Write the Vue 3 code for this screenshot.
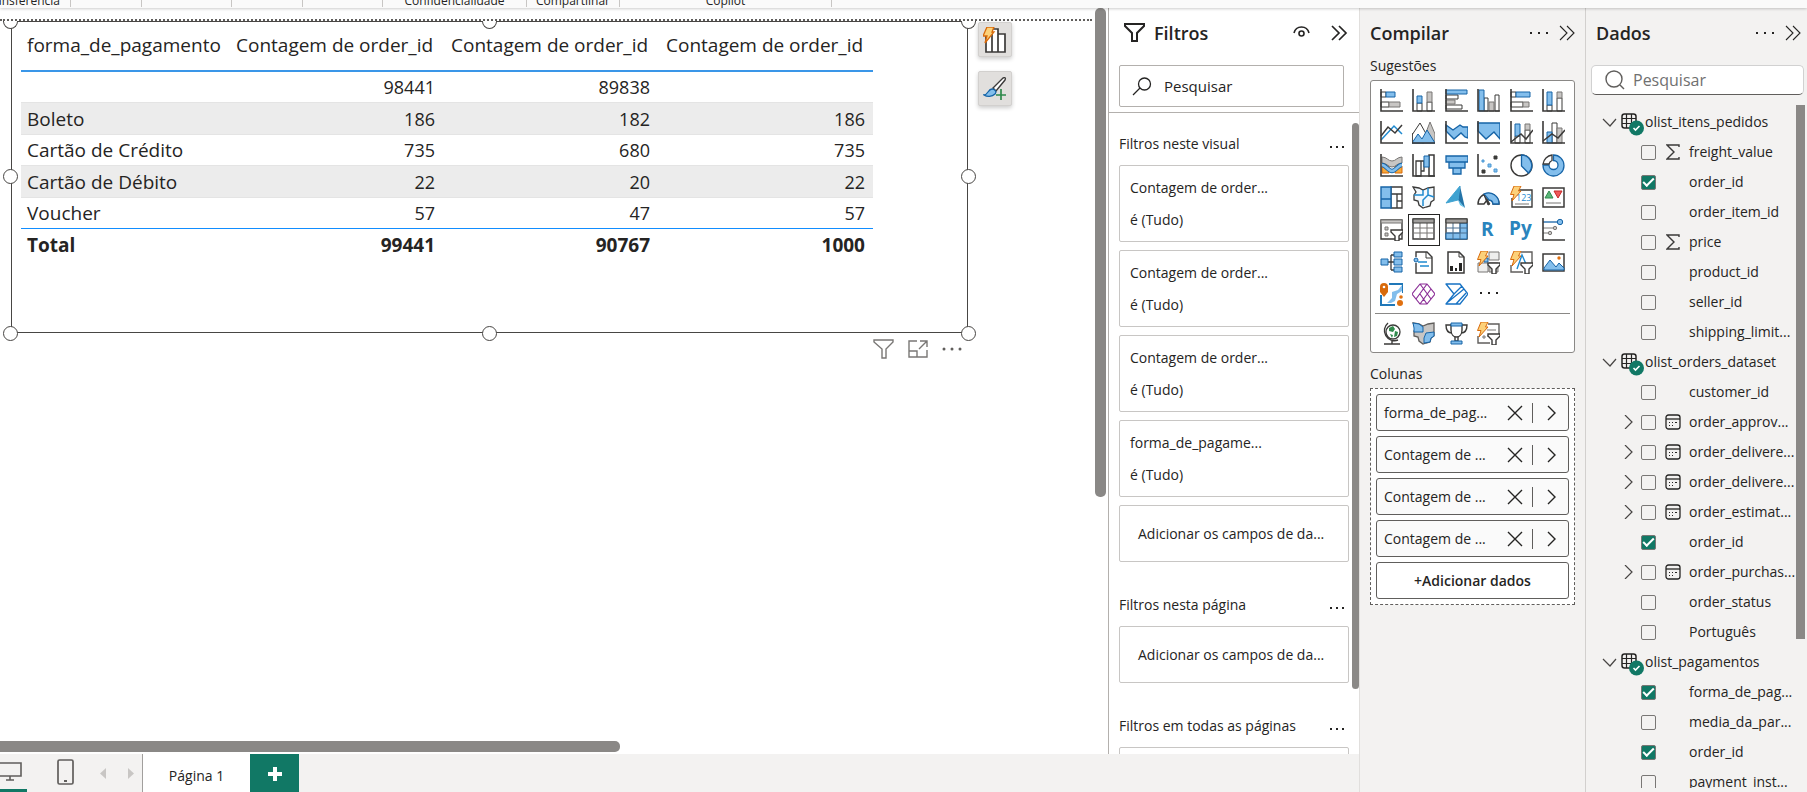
<script setup>
import { ref } from 'vue'

const ribbonGroups = [
  { label: 'Transferência', width: 71, end: true },
  { label: '', width: 71 },
  { label: '', width: 90 },
  { label: '', width: 71 },
  { label: '', width: 80 },
  { label: 'Confidencialidade', width: 144 },
  { label: 'Compartilhar', width: 93 },
  { label: 'Copilot', width: 212 }
]

const rows = [
  ['', '98441', '89838', ''],
  ['Boleto', '186', '182', '186'],
  ['Cartão de Crédito', '735', '680', '735'],
  ['Cartão de Débito', '22', '20', '22'],
  ['Voucher', '57', '47', '57']
]

const handles = ['nw', 'n', 'ne', 'w', 'e', 'sw', 's', 'se']

const filterGroups = [
  {
    title: 'Filtros neste visual',
    cards: ['Contagem de order...', 'Contagem de order...', 'Contagem de order...', 'forma_de_pagame...']
  },
  { title: 'Filtros nesta página', cards: [] },
  { title: 'Filtros em todas as páginas', cards: [] }
]

const columns = ['forma_de_pag...', 'Contagem de ...', 'Contagem de ...', 'Contagem de ...']

const tables = ref([
  {
    name: 'olist_itens_pedidos',
    fields: [
      { name: 'freight_value', icon: 'sum' },
      { name: 'order_id', checked: true },
      { name: 'order_item_id' },
      { name: 'price', icon: 'sum' },
      { name: 'product_id' },
      { name: 'seller_id' },
      { name: 'shipping_limit...' }
    ]
  },
  {
    name: 'olist_orders_dataset',
    fields: [
      { name: 'customer_id' },
      { name: 'order_approv...', icon: 'date' },
      { name: 'order_delivere...', icon: 'date' },
      { name: 'order_delivere...', icon: 'date' },
      { name: 'order_estimat...', icon: 'date' },
      { name: 'order_id', checked: true },
      { name: 'order_purchas...', icon: 'date' },
      { name: 'order_status' },
      { name: 'Português' }
    ]
  },
  {
    name: 'olist_pagamentos',
    fields: [
      { name: 'forma_de_pag...', checked: true },
      { name: 'media_da_par...' },
      { name: 'order_id', checked: true },
      { name: 'payment_inst...' }
    ]
  }
])

// colour shorthands for the visual gallery
const D = 'stroke="#3b3a39"'
const W = 'fill="#fff" stroke="#3b3a39"'
const B = 'fill="#83beec" stroke="#1664a7"'
const G = 'fill="#c8c6c4" stroke="#797775"'
const axis = `<path d="M1 0V22H23" ${D} stroke-width="1.6"/>`
const bolt = '<path d="M4 0h7L8.500 5H11L2 15l2-6.500H.5z" fill="#fcd17a" stroke="#d86a0b"/>'
const funnel = `<path d="M11 12h12v2l-4 4v5h-4v-5l-4-4z" ${W} stroke-width="1.4"/>`
const mapShape = 'M1 1l6 1 4 2 5-2 6-1v13l-3 2-1 4-4 1-3 1-4-3-1-4-4-1V9l2-3z'

const visuals = [
  { name: 'Barras empilhadas', svg: `<path d="M1 3h5v5H1zM1 13h8v5H1z" ${W}/><path d="M6 3h9v5H6z" ${B}/><path d="M9 13h11v5H9z" ${G}/>${axis}` },
  { name: 'Colunas empilhadas', svg: `<path d="M5 14h5v8H5zM15 13h5v9h-5z" ${W}/><path d="M5 7h5v7H5z" ${B}/><path d="M15 3h5v10h-5z" ${G}/>${axis}` },
  { name: 'Barras clusterizadas', svg: `<path d="M1 6h12v4H1zM1 16h16v4H1z" ${W}/><path d="M1 11h9v4H1z" ${G}/><path d="M1 1h21v4H1z" ${B}/>${axis}` },
  { name: 'Colunas clusterizadas', svg: `<path d="M7 9h4v13H7zM18 6h4v16h-4z" ${W}/><path d="M12 13h5v9h-5z" ${G}/><path d="M2 1h5v21H2z" ${B}/>${axis}` },
  { name: 'Barras 100%', svg: `<path d="M1 3h5v5H1zM1 13h12v5H1z" ${W}/><path d="M6 3h14v5H6z" ${B}/><path d="M13 13h6v5h-6z" ${G}/>${axis}` },
  { name: 'Colunas 100%', svg: `<path d="M5 16h5v6H5zM15 9h5v13h-5z" ${W}/><path d="M5 3h5v13H5z" ${B}/><path d="M15 3h5v6h-5z" ${G}/>${axis}` },
  { name: 'Linhas', svg: `<path d="M1 19L14 5l8 8" stroke="#1f8ad0" stroke-width="1.5"/><path d="M1 15l7-9 7 6 7-8" ${D} stroke-width="1.5"/>${axis}` },
  { name: 'Área', svg: `<path d="M10 22L18 1l5 12v9z" ${G}/><path d="M0 14L8 2l9 16-5 4H0z" ${W}/><path d="M0 22l6-9 4 5 5-9 8 13z" ${B}/><path d="M0 12v10h23" ${D} stroke-width="1.6"/>` },
  { name: 'Área empilhada', svg: `<path d="M1 4l7 5 7-5 3 2h5v11l-3-1-4-4-7 6-8-8z" ${B} stroke-width="1.4"/>${axis}` },
  { name: 'Área 100%', svg: `<path d="M1 2h22v16l-6-7-8 7-8-8z" ${B} stroke-width="1.4"/>${axis}` },
  { name: 'Linhas e colunas empilhadas', svg: `<path d="M5 15h5v7H5zM15 9h5v13h-5z" ${W}/><path d="M5 3h5v12H5z" ${B}/><path d="M15 3h5v6h-5z" ${G}/><path d="M1 21l10-8 5 5 7-9" ${D} stroke-width="1.5"/>${axis}` },
  { name: 'Linhas e colunas clusterizadas', svg: `<path d="M10 2h5v20h-5z" ${W}/><path d="M15 7h5v15h-5z" ${G}/><path d="M5 11h5v11H5z" ${B}/><path d="M1 20l9-7 6 4 7-8" ${D} stroke-width="1.5"/>${axis}` },
  { name: 'Faixas', svg: `<path d="M2 12h7v7H2zM15 12h7v7h-7z" fill="#f7a93b" stroke="#d86a0b"/><path d="M2 3c5 0 6 4 10 4s5-4 10-4v6c-5 0-6 4-10 4S7 9 2 9z" ${G}/><path d="M2 11c4 0 6 6 10 6s6-6 10-6" stroke="#1664a7" stroke-width="4.500"/><path d="M2 11c4 0 6 6 10 6s6-6 10-6" stroke="#83beec" stroke-width="2.500"/>${axis}` },
  { name: 'Cascata', svg: `<path d="M4 7h5v15H4zM9 7h3v10H9z" ${W} stroke-width="1.3"/><path d="M17 1h5v21h-5z" ${W} stroke-width="1.5"/><path d="M12 2h5v11h-5z" ${B}/>${axis}` },
  { name: 'Funil', svg: `<path d="M1 2h22v6H1zM4 8h16v6H4zM8 14h8v6H8z" ${B} stroke-width="1.3"/>` },
  { name: 'Dispersão', svg: `<path d="M17 2h3v3h-3zM5 16h3v3H5z" fill="#3b3a39" ${D}/><path d="M5 6h2v2H5zM11 10h3v3h-3zM17 15h3v3h-3z" fill="#83beec" stroke="#4a98d4"/>${axis}` },
  { name: 'Pizza', svg: `<circle cx="11.500" cy="11.500" r="10.500" ${W} stroke-width="1.4"/><path d="M11.500 1a10.500 10.500 0 0 1 7 18l-7-7z" ${B} stroke-width="1.3"/>` },
  { name: 'Rosca', svg: `<path d="M11.500 1a10.500 10.500 0 1 1-10.500 10h6a4.500 4.500 0 1 0 4.500-4.500z" ${B} stroke-width="1.3"/><path d="M1 10a10.500 10.500 0 0 1 9-9v5.500A5 5 0 0 0 7 10z" ${W} stroke-width="1.3"/>` },
  { name: 'Treemap', svg: `<path d="M11 1h11v7H11zM11 8h6v14h-6zM17 8h5v7h-5zM17 15h5v7h-5z" ${W} stroke-width="1.3"/><path d="M1 1h10v12H1zM1 13h10v9H1z" ${B} stroke-width="1.4"/>` },
  { name: 'Mapa', svg: `<path d="${mapShape}" fill="#f3f9fd" ${D} stroke-width="1.3"/><path d="M2 9h9V4M16 2v7l6 2M11 20v-6l5-5" stroke="#1f8ad0" stroke-width="1.5"/>` },
  { name: 'Azure Maps', svg: '<path d="M15 0L1 17l12-3z" fill="#3fa2d1"/><path d="M15 0l5 22-7-8z" fill="#2474a8"/><path d="M13 14l7 8-5-3z" fill="#58bde6"/><path d="M15 0L1 17l12-3z" stroke="#3fa2d1"/>' },
  { name: 'Medidor', svg: `<path d="M1 18a10.500 10.500 0 0 1 21 0h-6a4.500 4.500 0 0 0-6-4l-3 4z" ${W} stroke-width="1.4"/><path d="M7 8a10.500 10.500 0 0 1 15 10h-6a4.500 4.500 0 0 0-4-4z" ${B} stroke-width="1.3"/><path d="M7 9l6 9-2 1z" fill="#3b3a39" ${D}/>` },
  { name: 'Cartão', svg: `<path d="M4 4h18v17H2V12" ${W} stroke-width="1.4"/><text x="6" y="15" font-size="9" fill="#1f8ad0" font-family="Open Sans, sans-serif">123</text><path d="M5 18h14" stroke="#797775"/>${bolt}` },
  { name: 'KPI', svg: `<path d="M1 2h21v19H1z" ${W} stroke-width="1.5"/><path d="M3 12l4-7 4 7z" fill="#5cb77a" stroke="#2f8a4c"/><path d="M12 5h8l-4 7z" fill="#ef5a5a" stroke="#c62828"/><path d="M4 17h15" stroke="#797775"/>` },
  { name: 'Segmentação', svg: `<path d="M1 2h21v19H1z" ${W} stroke-width="1.4"/><path d="M1 2h21v3H1z" ${G}/><path d="M5 9h3v3H5zM5 15h3v3H5z" ${G}/>${funnel}` },
  { name: 'Tabela', active: true, svg: `<path d="M1 1h21v20H1z" ${W} stroke-width="1.4"/><path d="M8 5v16M15 5v16M1 10h21M1 15h21" stroke="#797775"/><path d="M1 1h21v4H1z" fill="#a19f9d" ${D}/>` },
  { name: 'Matriz', svg: `<path d="M1 1h21v20H1z" ${W} stroke-width="1.4"/><path d="M15 5h7v16H1v-6h14z" ${B}/><path d="M8 5v16M15 5v16M1 10h21M1 15h21" stroke="#4a6f8f"/><path d="M1 1h21v4H1z" fill="#a19f9d" ${D}/>` },
  { name: 'R', svg: '<text x="4" y="18" font-size="19" font-weight="700" fill="#2a84bd" font-family="Open Sans, sans-serif">R</text>' },
  { name: 'Python', svg: '<text x="-1" y="17" font-size="19" font-weight="700" fill="#2a84bd" font-family="Open Sans, sans-serif">Py</text>' },
  { name: 'Influenciadores', svg: `<path d="M1 4h15" stroke="#1664a7" stroke-width="1.3"/><circle cx="18" cy="4" r="2.700" ${B}/><path d="M1 10h11M1 15h6" stroke="#797775"/><circle cx="13" cy="10" r="1.700" ${G}/><circle cx="8" cy="15" r="1.700" ${G}/>${axis}` },
  { name: 'Árvore', svg: `<path d="M8 11h7M11 4v15M11 4h4M11 19h4" ${D} stroke-width="1.3"/><path d="M1 8h7v6H1zM14 1h8v5h-8zM14 8h8v6h-8zM14 16h8v5h-8z" ${B}/>` },
  { name: 'Narrativa', svg: `<path d="M4 12v10h16V6l-5-5H4v5" ${W} stroke-width="1.4"/><path d="M14 1v6h6" ${D}/><circle cx="4" cy="9" r="2" ${B}/><path d="M6 11h9M8 15h9" stroke="#1f8ad0" stroke-width="1.3"/>` },
  { name: 'Relatório paginado', svg: `<path d="M3 1h11l5 5v16H3z" ${W} stroke-width="1.5"/><path d="M14 1v5h5" ${D}/><path d="M5 15h3v5H5zM10 17h2v3h-2zM14 12h3v8h-3z" fill="#252423"/>` },
  { name: 'Segmentação de botões', svg: `<path d="M12 1h10v8H12zM1 12h10v9H1z" ${G} fill-opacity=".3"/><path d="M7 7h4v4H7z" ${B}/><path d="M12 12h9v9h-9z" ${G}/>${bolt}${funnel}` },
  { name: 'Segmentação de texto', svg: `<path d="M11 1h11v11M1 14v7h12" stroke="#605e5c" stroke-width="1.4"/><path d="M7 18l5-14 4 9" stroke="#1f8ad0" stroke-width="1.4"/>${bolt}${funnel}` },
  { name: 'Imagem', svg: `<path d="M1 3h21v17H1z" ${W} stroke-width="1.5"/><path d="M2 17l6-8 6 7 3-4 5 5v2H2z" ${B}/><circle cx="17" cy="7" r="1.700" fill="#e07010"/>` },
  { name: 'ArcGIS', svg: '<path d="M9 1h14v9M1 12v10h14" stroke="#1f77b8" stroke-width="2"/><path d="M22 2v6l-5 3-2 7-4 2H7l5-5v-6l6-2z" fill="#83beec"/><path d="M4 0a4 4 0 0 1 4 4v5l-4 5-4-5V4a4 4 0 0 1 4-4z" fill="#d86a0b"/><circle cx="4" cy="4" r="1.300" fill="#fff"/><circle cx="20" cy="20" r="3" fill="#e07010"/><circle cx="21" cy="14" r="1.800" fill="#e07010"/>' },
  { name: 'Power Apps', svg: '<path d="M8 1h7l8 10-8 10H8L0 11zM8 1l11 15M15 1L4 16M8 21L19 6M15 21l-7-10" stroke="#8b2f97" stroke-width="1.2" stroke-linejoin="round"/>' },
  { name: 'Power Automate', svg: '<path d="M1 1h14l8 10-8 10H1l8-10zM9 11l8-8M3 19L19 6M11 21l10-11" stroke="#1672c4" stroke-width="1.3" stroke-linejoin="round"/>' },
  { name: 'Mais visuais', svg: '<path d="M3 9h2v2H3zM11 9h2v2h-2zM19 9h2v2h-2z" fill="#252423"/>' }
]

const extraVisuals = [
  { name: 'Globo', svg: '<circle cx="13" cy="10" r="7" fill="#fff" stroke="#3b3a39" stroke-width="1.300"/><path d="M9 6l4-2 2 3-2 3-4-1zM15 9l3 1-1 4-3 1zM10 12l3 1-1 3z" fill="#2f8a4c"/><path d="M8 1a10 10 0 0 0 10 17M12 19v3M4 22h16" stroke="#3b3a39" stroke-width="1.400"/>' },
  { name: 'Mapa de formas', svg: `<path d="${mapShape}" fill="#c8c6c4" stroke="#605e5c" stroke-width="1.3"/><path d="M1 1l6 1 4 3v5H2V6zM14 11l8-1v4l-3 2-1 4-6 1v-5z" ${B}/>` },
  { name: 'Troféu', svg: `<path d="M6 3H1c0 6 2 8 6 8M17 3h5c0 6-2 8-6 8M10 14v5h3v-5" ${D} stroke-width="1.4"/><path d="M6 3h11v5c0 5-3 7-5.500 7S6 13 6 8z" ${W} stroke-width="1.4"/><path d="M6 1h11v3H6zM6 19h11v3H6z" ${B}/>` },
  { name: 'Segmentação de lista', svg: `<path d="M11 2h11v10M1 14v7h12" stroke="#605e5c" stroke-width="1.4"/><path d="M10 8h9M10 14h5M6 14h2v2H6z" stroke="#797775"/>${bolt}${funnel}` }
]
</script>

<template>
  <div class="app">
    <header class="ribbon">
      <div
        v-for="(group, i) in ribbonGroups"
        :key="i"
        class="ribbon-group"
        :class="{ end: group.end }"
        :style="{ width: group.width + 'px' }"
      >
        <span>{{ group.label }}</span>
      </div>
    </header>

    <div class="workspace">
      <div class="report">
        <div class="report-body">
          <main class="canvas">
            <div class="page-edge"></div>
            <section class="visual">
              <i v-for="h in handles" :key="h" class="handle" :class="h"></i>
              <table>
                <thead>
                  <tr>
                    <th class="first">forma_de_pagamento</th>
                    <th v-for="n in 3" :key="n">Contagem de order_id</th>
                  </tr>
                </thead>
                <tbody>
                  <tr v-for="row in rows" :key="row[0]">
                    <td v-for="(cell, i) in row" :key="i">{{ cell }}</td>
                  </tr>
                </tbody>
                <tfoot>
                  <tr>
                    <td>Total</td>
                    <td>99441</td>
                    <td>90767</td>
                    <td>1000</td>
                  </tr>
                </tfoot>
              </table>

              <div class="side-tools">
                <button aria-label="Sugerir visual">
                  <svg width="24" height="26" viewBox="0 0 24 26" fill="none">
                    <path d="M3 7h6v18H3zM9 2h6v23H9zM15 7h7v18h-7z" fill="#fff" stroke="#3b3a39" stroke-width="1.7" />
                    <path d="M4 0h7L9 5h2L2 16l2-7H0z" fill="#fcd17a" stroke="#d86a0b" stroke-width="1.3" />
                  </svg>
                </button>
                <button aria-label="Formatar visual">
                  <svg width="24" height="24" viewBox="0 0 24 24" fill="none">
                    <path d="M10 11L20 1c2-1 3 0 2 2l-9 11z" fill="#fff" stroke="#3b3a39" stroke-width="1.4" />
                    <path d="M1 18c4 0 4-6 8-6 3 0 5 3 3 5-3 3-8 3-11 1z" fill="#83beec" stroke="#1664a7" stroke-width="1.3" />
                    <path d="M18 13v10M13 18h10" stroke="#e1dfdd" stroke-width="4" />
                    <path d="M18 12v11M13 18h10" stroke="#2f8a4c" stroke-width="1.7" />
                  </svg>
                </button>
              </div>

              <div class="visual-tools">
                <button aria-label="Filtros do visual">
                  <svg width="21" height="20" viewBox="0 0 21 20" fill="none">
                    <path d="M1 1h19v2l-7 7v9H9v-9L1 3z" stroke="#797775" stroke-width="1.4" />
                  </svg>
                </button>
                <button aria-label="Modo de foco">
                  <svg width="20" height="18" viewBox="0 0 20 18" fill="none">
                    <path d="M9 1H1v16h18v-7M1 11h8v6M12 1h7v6M19 1l-8 8" stroke="#797775" stroke-width="1.4" />
                  </svg>
                </button>
                <button aria-label="Mais opções">
                  <svg width="20" height="4" viewBox="0 0 20 4" fill="#605e5c">
                    <circle cx="2" cy="2" r="1.5" /><circle cx="10" cy="2" r="1.5" /><circle cx="18" cy="2" r="1.5" />
                  </svg>
                </button>
              </div>
            </section>
            <div class="scroll-v"></div>
            <div class="scroll-h"></div>
          </main>

          <aside class="filters">
            <div class="pane-head">
              <svg width="22" height="20" viewBox="0 0 22 20" fill="none">
                <path d="M1 1h19v2l-7 7v8H8v-8L1 3z" stroke="#252423" stroke-width="2" />
              </svg>
              <h2>Filtros</h2>
              <button aria-label="Mostrar filtros">
                <svg width="17" height="15" viewBox="0 0 17 15" fill="none" stroke="#252423" stroke-width="1.6">
                  <path d="M1 7c2-8 13-8 15 0" /><circle cx="8.500" cy="7.500" r="2.500" />
                </svg>
              </button>
              <button aria-label="Recolher filtros">
                <svg width="17" height="16" viewBox="0 0 17 16" fill="none" stroke="#252423" stroke-width="1.7">
                  <path d="M1 1l7 7-7 7M8 1l7 7-7 7" />
                </svg>
              </button>
            </div>
            <label class="filter-search">
              <svg width="20" height="19" viewBox="0 0 20 19" fill="none" stroke="#252423" stroke-width="1.3">
                <circle cx="12.500" cy="7" r="6" /><path d="M8 11l-7 7" />
              </svg>
              <input type="text" placeholder="Pesquisar" aria-label="Pesquisar filtros" />
            </label>
            <div class="filter-list">
              <section v-for="group in filterGroups" :key="group.title" class="filter-group">
                <div class="group-head">
                  <h3>{{ group.title }}</h3>
                  <button aria-label="Mais opções">
                    <svg width="14" height="2" viewBox="0 0 14 2" fill="#252423">
                      <path d="M0 0h2v2H0zM6 0h2v2H6zM12 0h2v2h-2z" />
                    </svg>
                  </button>
                </div>
                <div v-for="(card, i) in group.cards" :key="i" class="filter-card">
                  <span>{{ card }}</span>
                  <span>é (Tudo)</span>
                </div>
                <div class="filter-card drop">Adicionar os campos de da...</div>
              </section>
              <div class="filter-scroll"></div>
            </div>
          </aside>
        </div>

        <footer class="pages">
          <button class="view active" aria-label="Layout da área de trabalho">
            <svg width="27" height="20" viewBox="0 0 27 20" fill="none" stroke="#605e5c" stroke-width="1.6">
              <path d="M0 1h21v13H0M10 14v4M6 18h8" />
            </svg>
          </button>
          <button class="view" aria-label="Layout móvel">
            <svg width="17" height="26" viewBox="0 0 17 26" fill="none">
              <rect x="1" y="1" width="15" height="24" rx="1.500" stroke="#605e5c" stroke-width="1.7" />
              <path d="M7 21h3v2H7z" fill="#605e5c" />
            </svg>
          </button>
          <button class="arrow" aria-label="Página anterior">
            <svg width="6" height="11" viewBox="0 0 6 11" fill="#c8c6c4"><path d="M6 0v11L0 5.500z" /></svg>
          </button>
          <button class="arrow" aria-label="Próxima página">
            <svg width="6" height="11" viewBox="0 0 6 11" fill="#c8c6c4"><path d="M0 0v11l6-5.500z" /></svg>
          </button>
          <button class="tab">Página 1</button>
          <button class="add-page" aria-label="Nova página">
            <svg width="14" height="14" viewBox="0 0 14 14" fill="#fff"><path d="M5 0h4v5h5v4H9v5H5V9H0V5h5z" /></svg>
          </button>
        </footer>
      </div>

      <aside class="build">
        <div class="pane-head">
          <h2>Compilar</h2>
          <button aria-label="Mais opções">
            <svg width="18" height="2" viewBox="0 0 18 2" fill="#252423">
              <path d="M0 0h2v2H0zM8 0h2v2H8zM16 0h2v2h-2z" />
            </svg>
          </button>
          <button aria-label="Recolher">
            <svg width="16" height="16" viewBox="0 0 16 16" fill="none" stroke="#252423" stroke-width="1.1">
              <path d="M1 1l7 7-7 7M8 1l7 7-7 7" />
            </svg>
          </button>
        </div>
        <h3>Sugestões</h3>
        <div class="gallery">
          <div class="icons">
            <button v-for="v in visuals" :key="v.name" :class="{ active: v.active }" :aria-label="v.name">
              <svg width="23" height="23" viewBox="0 0 23 23" fill="none" v-html="v.svg"></svg>
            </button>
          </div>
          <div class="icons extra">
            <button v-for="v in extraVisuals" :key="v.name" :aria-label="v.name">
              <svg width="23" height="23" viewBox="0 0 23 23" fill="none" v-html="v.svg"></svg>
            </button>
          </div>
        </div>
        <h3 class="wells-title">Colunas</h3>
        <div class="well">
          <div v-for="(col, i) in columns" :key="i" class="chip">
            <span>{{ col }}</span>
            <button class="remove" aria-label="Remover campo">
              <svg width="16" height="16" viewBox="0 0 16 16" fill="none" stroke="#252423" stroke-width="1.4">
                <path d="M1 1l14 14M15 1L1 15" />
              </svg>
            </button>
            <button class="open" aria-label="Opções do campo">
              <svg width="9" height="16" viewBox="0 0 9 16" fill="none" stroke="#252423" stroke-width="1.4">
                <path d="M1 1l7 7-7 7" />
              </svg>
            </button>
          </div>
          <button class="add-data">+Adicionar dados</button>
        </div>
      </aside>

      <aside class="data">
        <div class="pane-head">
          <h2>Dados</h2>
          <button aria-label="Mais opções">
            <svg width="18" height="2" viewBox="0 0 18 2" fill="#252423">
              <path d="M0 0h2v2H0zM8 0h2v2H8zM16 0h2v2h-2z" />
            </svg>
          </button>
          <button aria-label="Recolher">
            <svg width="16" height="16" viewBox="0 0 16 16" fill="none" stroke="#252423" stroke-width="1.1">
              <path d="M1 1l7 7-7 7M8 1l7 7-7 7" />
            </svg>
          </button>
        </div>
        <label class="data-search">
          <svg width="20" height="20" viewBox="0 0 20 20" fill="none" stroke="#605e5c" stroke-width="1.4">
            <circle cx="9" cy="9" r="8" /><path d="M15 15l4 4" />
          </svg>
          <input type="text" placeholder="Pesquisar" aria-label="Pesquisar dados" />
        </label>
        <div class="tree">
          <div v-for="table in tables" :key="table.name">
            <div class="table-row">
              <svg width="15" height="9" viewBox="0 0 15 9" fill="none" stroke="#484644" stroke-width="1.2">
                <path d="M1 1l7 7 6-7" />
              </svg>
              <svg width="24" height="24" viewBox="0 0 24 24" fill="none">
                <rect x="1" y="2" width="14" height="14" rx="2.500" stroke="#252423" stroke-width="1.5" />
                <path d="M5.500 2v14M10.500 2v14M1 6.500h14M1 11.500h14" stroke="#252423" stroke-width="1.2" />
                <circle cx="15.500" cy="16" r="7.500" fill="#117865" />
                <path d="M12.500 16l2 2 4-4" stroke="#fff" stroke-width="1.6" />
              </svg>
              <span>{{ table.name }}</span>
            </div>
            <label v-for="(field, i) in table.fields" :key="i" class="field-row">
              <span class="expand">
                <svg v-if="field.icon === 'date'" width="9" height="14" viewBox="0 0 9 14" fill="none" stroke="#484644" stroke-width="1.2">
                  <path d="M1 0l7 7-7 7" />
                </svg>
              </span>
              <input v-model="field.checked" type="checkbox" />
              <span class="kind">
                <svg v-if="field.icon === 'sum'" width="14" height="16" viewBox="0 0 14 16" fill="none" stroke="#3b3a39" stroke-width="1.4">
                  <path d="M13 3V1H1l7 7-7 7h12v-2" />
                </svg>
                <svg v-if="field.icon === 'date'" width="16" height="16" viewBox="0 0 16 16" fill="none">
                  <rect x="1" y="1" width="14" height="14" rx="2.500" stroke="#252423" stroke-width="1.3" />
                  <path d="M1 5h14" stroke="#252423" stroke-width="1.3" />
                  <path d="M7 8h1v1H7zM10 8h2v1h-2zM4 11h1v1H4zM7 11h1v1H7zM4 8h1v1H4z" fill="#252423" />
                </svg>
              </span>
              <span>{{ field.name }}</span>
            </label>
          </div>
          <div class="tree-scroll"></div>
        </div>
      </aside>
    </div>
  </div>
</template>

<style>
body {
  margin: 0;
}
</style>

<style scoped>
.app {
  display: flex;
  flex-direction: column;
  height: 100vh;
  overflow: hidden;
  background: #fff;
  color: #252423;
  font-family: "Open Sans", "Noto Sans", sans-serif;
  font-size: 14px;
  line-height: 20px;
}

* {
  box-sizing: border-box;
}

button {
  display: flex;
  align-items: center;
  justify-content: center;
  padding: 0;
  border: none;
  background: none;
  color: inherit;
  font: inherit;
  cursor: pointer;
}

svg {
  display: block;
  flex: none;
}

h2,
h3 {
  margin: 0;
  font-weight: 400;
  font-size: 14px;
}

input[type='text'] {
  flex: 1;
  min-width: 0;
  padding: 0;
  border: none;
  outline: none;
  background: none;
  font: inherit;
}

/* Ribbon */
.ribbon {
  position: relative;
  z-index: 2;
  display: flex;
  flex: none;
  height: 8px;
  background: #fafafa;
  box-shadow: 0 1px 3px rgba(0, 0, 0, 0.2);
}

.ribbon-group {
  display: flex;
  align-items: flex-end;
  justify-content: center;
  flex: none;
  height: 7px;
  border-right: 1px solid #c8c6c4;
  font-size: 12px;
  line-height: 12px;
}

.ribbon-group.end {
  justify-content: flex-end;
  padding-right: 10px;
}

/* Layout */
.workspace {
  display: flex;
  flex: 1;
  min-height: 0;
}

.report {
  display: flex;
  flex-direction: column;
  flex: 1;
  min-width: 0;
}

.report-body {
  display: flex;
  flex: 1;
  min-height: 0;
}

.canvas {
  position: relative;
  flex: 1;
  min-width: 0;
  overflow: hidden;
}

.page-edge {
  margin: 11px 16px 0 0;
  border-top: 2px dotted #605e5c;
}

/* Table visual */
.visual {
  position: relative;
  height: 312px;
  margin: 0 140px 0 11px;
  padding: 0 9px;
  border: 1px solid #484644;
}

.handle {
  position: absolute;
  width: 15px;
  height: 15px;
  border: 1px solid #484644;
  border-radius: 50%;
  background: #fff;
}

.nw,
.n,
.ne {
  top: -1px;
  height: 8px;
  border-top: none;
  border-radius: 0 0 8px 8px;
}

.w,
.e {
  top: 147px;
}

.sw,
.s,
.se {
  bottom: -9px;
}

.nw,
.w,
.sw {
  left: -9px;
}

.n,
.s {
  left: calc(50% - 8px);
}

.ne,
.e,
.se {
  right: -9px;
}

table {
  border-collapse: separate;
  border-spacing: 0;
  table-layout: fixed;
  width: 852px;
  font-size: 19px;
  line-height: 28px;
}

th {
  height: 50px;
  padding: 9px 8px 11px;
  border-bottom: 2px solid #3a96e8;
  font-weight: 400;
  text-align: left;
  white-space: nowrap;
}

th.first {
  width: 207px;
}

th:first-child,
td:first-child {
  padding-left: 6px;
  text-align: left;
}

td {
  height: 30px;
  padding: 1px 8px 1px;
  text-align: right;
  line-height: 28px;
}

tbody td + td {
  font-size: 18px;
}

tbody tr:nth-child(even) td {
  height: 33px;
  background: #ececec;
  border-top: 1px solid #e4e4e4;
  border-bottom: 1px solid #e4e4e4;
}

tfoot td {
  padding-top: 2px;
  border-top: 1px solid #118dff;
  font-weight: 700;
}

.side-tools {
  position: absolute;
  top: 0;
  right: -45px;
  display: flex;
  flex-direction: column;
  gap: 14px;
}

.side-tools button {
  width: 34px;
  height: 35px;
  border: 1px solid #d2d0ce;
  border-radius: 2px;
  background: #e1dfdd;
  box-shadow: 0 2px 4px rgba(0, 0, 0, 0.2);
}

.visual-tools {
  position: absolute;
  right: 5px;
  bottom: -27px;
  display: flex;
  align-items: center;
  gap: 14px;
}

.scroll-v {
  position: absolute;
  top: 0;
  right: 2px;
  width: 11px;
  height: 489px;
  border-radius: 5px;
  background: #8a8886;
}

.scroll-h {
  position: absolute;
  left: 0;
  bottom: 2px;
  width: 620px;
  height: 11px;
  border-radius: 0 5px 5px 0;
  background: #8a8886;
}

/* Panes */
.pane-head {
  display: flex;
  align-items: center;
  gap: 11px;
  height: 50px;
}

.pane-head h2 {
  flex: 1;
  font-size: 18px;
  font-weight: 600;
}

.filters {
  display: flex;
  flex-direction: column;
  flex: none;
  width: 251px;
  border-left: 1px solid #b3b0ad;
  overflow: hidden;
}

.filters .pane-head {
  gap: 8px;
  padding: 0 11px 0 15px;
}

.filters .pane-head button + button {
  margin-left: 13px;
}

.filter-search {
  display: flex;
  align-items: center;
  gap: 12px;
  flex: none;
  height: 42px;
  margin: 7px 15px 5px 10px;
  padding: 0 12px;
  border: 1px solid #b3b0ad;
  border-radius: 2px;
  font-size: 15px;
}

.filter-search input::placeholder {
  color: #252423;
  opacity: 1;
}

.filter-list {
  position: relative;
  flex: 1;
  min-height: 0;
  overflow: hidden;
  padding: 21px 10px 0;
  border-top: 1px solid #b3b0ad;
}

.filter-group {
  display: flex;
  flex-direction: column;
  gap: 8px;
  margin-bottom: 33px;
}

.group-head {
  display: flex;
  align-items: center;
  justify-content: space-between;
  height: 20px;
  margin-bottom: 3px;
  padding-right: 5px;
}

.group-head button {
  padding-top: 6px;
}

.filter-card {
  display: flex;
  flex-direction: column;
  justify-content: center;
  gap: 12px;
  flex: none;
  height: 77px;
  padding: 0 10px;
  border: 1px solid #c8c6c4;
  border-radius: 2px;
}

.filter-card.drop {
  height: 57px;
  padding: 0 18px;
  white-space: nowrap;
}

.filter-scroll {
  position: absolute;
  top: 10px;
  right: 0;
  width: 7px;
  height: 566px;
  border-radius: 4px;
  background: #8a8886;
}

/* Page tabs */
.pages {
  display: flex;
  flex: none;
  height: 38px;
  background: #f3f2f1;
}

.view {
  width: 27px;
  border-bottom: 3px solid transparent;
}

.view.active {
  border-color: #117865;
}

.view + .view {
  width: 17px;
  margin: 0 26px 0 30px;
}

.arrow {
  width: 6px;
  margin-right: 22px;
}

.arrow + .arrow {
  margin-right: 8px;
}

.tab {
  width: 108px;
  padding-top: 6px;
  border-left: 1px solid #a19f9d;
  background: #fff;
}

.add-page {
  width: 49px;
  padding-top: 2px;
  background: #117865;
}

/* Build pane */
.build {
  flex: none;
  width: 226px;
  padding: 0 10px;
  border-left: 1px solid #e1dfdd;
  background: #f3f2f1;
}

.build .pane-head {
  height: 48px;
  padding-top: 2px;
}

.gallery {
  margin-top: 4px;
  height: 273px;
  border: 1px solid #8a8886;
  border-radius: 3px;
  background: #fff;
}

.icons {
  display: grid;
  grid-template-columns: repeat(6, 1fr);
  grid-template-rows: repeat(7, 1fr);
  height: 233px;
  margin: 0 4px;
  padding: 3px 0 2px;
  border-bottom: 1px solid #8a8886;
}

.icons.extra {
  grid-template-rows: 1fr;
  height: 38px;
  border-bottom: none;
}

.icons button.active {
  outline: 1px solid #252423;
  outline-offset: -1px;
}

.wells-title {
  margin-top: 11px;
}

.well {
  display: flex;
  flex-direction: column;
  gap: 5px;
  margin-top: 4px;
  padding: 5px;
  border: 1px dashed #605e5c;
  background: #fff;
}

.chip {
  display: flex;
  align-items: center;
  height: 37px;
  padding: 0 7px;
  border: 1px solid #605e5c;
  border-radius: 3px;
  background: #fafafa;
}

.chip span {
  flex: 1;
  white-space: nowrap;
}

.remove {
  width: 26px;
  height: 20px;
  padding-right: 10px;
  border-right: 1px solid #605e5c;
}

.open {
  width: 28px;
  padding-left: 8px;
}

.add-data {
  height: 37px;
  border: 1px solid #605e5c;
  border-radius: 3px;
  font-weight: 600;
}

/* Data pane */
.data {
  display: flex;
  flex-direction: column;
  flex: none;
  width: 222px;
  border-left: 1px solid #d2d0ce;
  background: #f3f2f1;
}

.data .pane-head {
  padding: 0 6px 0 10px;
}

.data-search {
  display: flex;
  align-items: center;
  gap: 8px;
  flex: none;
  height: 30px;
  margin: 7px 3px 0 5px;
  padding: 0 13px;
  border: 1px solid #d1d1d1;
  border-bottom-color: #605e5c;
  border-radius: 5px;
  background: #fff;
  font-size: 16px;
}

.data-search input::placeholder {
  color: #707070;
  opacity: 1;
}

.tree {
  position: relative;
  flex: 1;
  min-height: 0;
  overflow: hidden;
  margin-bottom: 4px;
  padding-top: 12px;
}

.table-row,
.field-row {
  display: flex;
  align-items: center;
  height: 30px;
  white-space: nowrap;
}

.table-row {
  padding-left: 16px;
}

.table-row svg + svg {
  margin: 4px 0 0 4px;
}

.field-row {
  padding-left: 38px;
}

.expand {
  width: 17px;
}

.field-row input {
  display: grid;
  place-items: center;
  appearance: none;
  flex: none;
  width: 15px;
  height: 15px;
  margin: 0;
  border: 1px solid #797775;
  border-radius: 2px;
}

.field-row input:checked {
  background: #117865;
}

.field-row input:checked::before {
  content: '';
  width: 9px;
  height: 4px;
  margin-bottom: 3px;
  border-left: 2px solid #fff;
  border-bottom: 2px solid #fff;
  transform: rotate(-45deg);
}

.kind {
  display: flex;
  justify-content: center;
  width: 33px;
  padding-right: 5px;
  padding-left: 5px;
}

.tree-scroll {
  position: absolute;
  top: 10px;
  right: 2px;
  width: 9px;
  height: 534px;
  background: #8a8886;
}
</style>
